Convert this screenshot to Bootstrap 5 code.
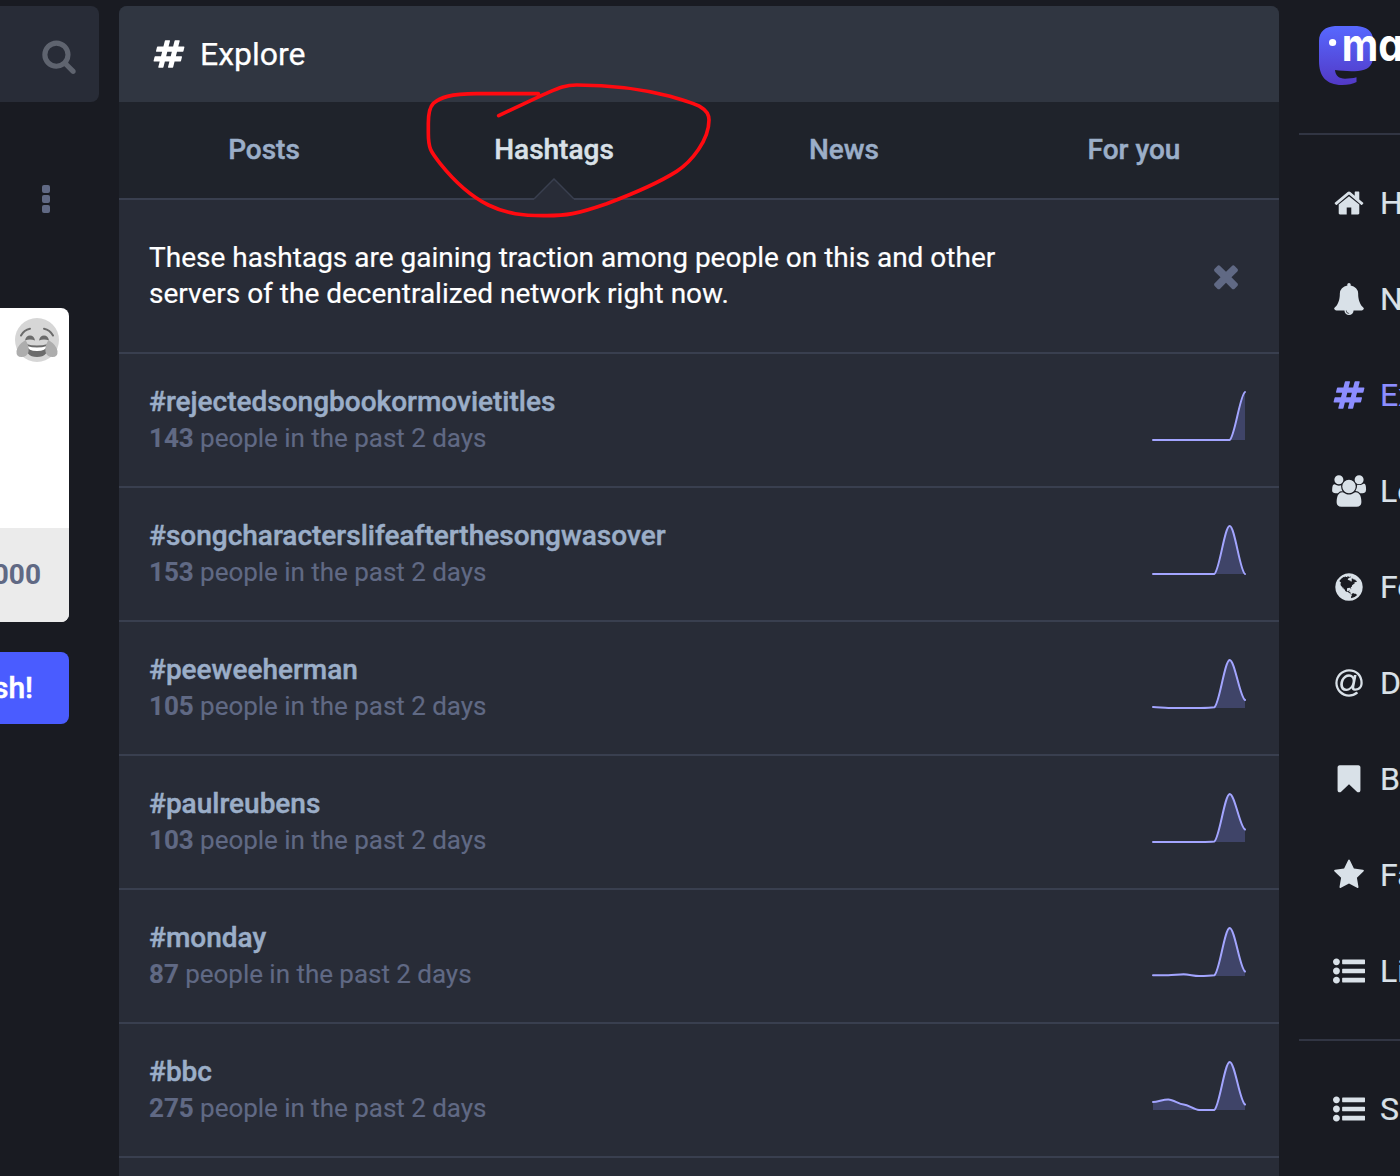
<!DOCTYPE html>
<html lang="en">
<head>
<meta charset="utf-8">
<meta name="viewport" content="width=device-width, initial-scale=1">
<title>Explore</title>
<link href="https://cdn.jsdelivr.net/npm/bootstrap@5.3.0/dist/css/bootstrap.min.css" rel="stylesheet">
<style>
  body { width: 1400px; height: 1176px; background: #191b22; font-family: Roboto, "Liberation Sans", sans-serif; font-size: 28px; line-height: 36px; color: #fff; overflow: hidden; }
  svg { display: block; fill: currentColor; flex: none; }
  .shell { width: 1400px; height: 1176px; gap: 20px; overflow: hidden; }
  .compose { width: 99px; padding-top: 6px; }
  .search-box { height: 96px; background: #282c37; border-radius: 0 8px 8px 0; color: #5f646f; padding: 32px 22px 0 0; }
  .dots { width: 8px; gap: 2.3px; margin: 82.5px 49.5px 0 0; }
  .dots i { width: 8px; height: 8px; border-radius: 2px; background: #606984; }
  .editor { width: 69px; height: 314px; margin-top: 94.9px; border-radius: 0 8px 8px 0; background: #fff; overflow: hidden; }
  .editor-top { height: 220px; padding: 10px 10px 0 0; }
  .editor-foot { height: 94px; background: #ebebeb; color: #606984; font-weight: 700; padding: 29px 28px 0 0; }
  .publish { width: 69px; height: 72px; margin-top: 30px; border-radius: 0 8px 8px 0; background: #4a5cff; font-size: 30px; font-weight: 500; padding: 0 36px 0 0; -webkit-text-stroke: .5px; }
  .column-main { width: 1160px; margin-top: 6px; background: #282c37; border-radius: 8px 8px 0 0; }
  .column-head { height: 96px; background: #303641; border-radius: 8px 8px 0 0; font-size: 32px; padding-left: 34px; gap: 15px; -webkit-text-stroke: .25px; }
  .tabs-row { height: 98px; background: #1f232b; border-bottom: 2px solid #393f4f; color: #9baec8; font-weight: 500; -webkit-text-stroke: .45px; }
  .tabs-row .tab-cell { flex: 1; }
  .tab-cell.current { color: #d9e1e8; }
  .notch { left: 50%; bottom: -2px; margin-left: -20px; }
  .note { height: 154px; border-bottom: 2px solid #393f4f; padding: 0 35px 0 30px; -webkit-text-stroke: .2px; }
  .trend { height: 134px; border-bottom: 2px solid #393f4f; padding: 0 29px 0 30px; color: #606984; }
  .trend-name { color: #9baec8; font-weight: 500; line-height: 36px; -webkit-text-stroke: .45px; }
  .trend-sub { font-size: 26px; line-height: 36px; letter-spacing: -.03px; -webkit-text-stroke: .15px; }
  .trend-sub b { font-weight: 700; }
  .spark { margin-top: -4px; }
  .side { width: 101px; color: #d9e1e8; font-size: 32px; overflow: hidden; }
  .brand { height: 133px; }
  .wordmark { font-family: Inter, "Liberation Sans", sans-serif; font-weight: 700; font-size: 45px; font-feature-settings: "cv11"; }
  .rule { height: 2px; background: #313543; }
  .links-wrap { padding-top: 20px; }
  .rule-low { margin-top: 20px; margin-bottom: 20px; }
  .side-link { height: 96px; padding-left: 34.4px; gap: 14.6px; white-space: nowrap; -webkit-text-stroke: .2px; }
  .side-link svg { margin-top: -.6px; }
  .side-link span { margin-top: -1px; }
  .side-link.on { color: #8c8dff; }
  .side-link .wide-icon { margin-left: -2px; margin-right: -2px; }
  .scribble { left: 410px; top: 70px; }
</style>
<script src="https://cdn.jsdelivr.net/npm/bootstrap@5.3.0/dist/js/bootstrap.bundle.min.js"></script>
</head>
<body>
<svg width="0" height="0" class="position-absolute">
  <symbol id="hash" viewBox="0 0 1792 1792"><path d="M991 1024l64-256h-254l-64 256h254zm768-504l-56 224q-7 24-31 24h-327l-64 256h311q15 0 25 12 10 14 6 28l-56 224q-5 24-31 24h-327l-81 328q-7 24-31 24h-224q-16 0-26-12-9-12-6-28l78-312h-254l-81 328q-7 24-31 24h-225q-15 0-25-12-9-12-6-28l78-312h-311q-15 0-25-12-9-12-6-28l56-224q7-24 31-24h327l64-256h-311q-15 0-25-12-10-14-6-28l56-224q5-24 31-24h327l81-328q7-24 32-24h224q15 0 25 12 9 12 6 28l-78 312h254l81-328q7-24 32-24h224q15 0 25 12 9 12 6 28l-78 312h311q15 0 25 12 9 12 6 28z"/></symbol>
  <symbol id="list" viewBox="0 0 1792 1792"><path d="M384 1408q0 80-56 136t-136 56-136-56-56-136 56-136 136-56 136 56 56 136zm0-512q0 80-56 136t-136 56-136-56-56-136 56-136 136-56 136 56 56 136zm1408 416v192q0 13-9.5 22.5t-22.5 9.5h-1216q-13 0-22.5-9.5t-9.5-22.5v-192q0-13 9.5-22.5t22.5-9.5h1216q13 0 22.5 9.5t9.5 22.5zm-1408-928q0 80-56 136t-136 56-136-56-56-136 56-136 136-56 136 56 56 136zm1408 416v192q0 13-9.5 22.5t-22.5 9.5h-1216q-13 0-22.5-9.5t-9.5-22.5v-192q0-13 9.5-22.5t22.5-9.5h1216q13 0 22.5 9.5t9.5 22.5zm0-512v192q0 13-9.5 22.5t-22.5 9.5h-1216q-13 0-22.5-9.5t-9.5-22.5v-192q0-13 9.5-22.5t22.5-9.5h1216q13 0 22.5 9.5t9.5 22.5z"/></symbol>
</svg>
<div class="shell d-flex position-relative">
  <aside class="compose d-flex flex-column flex-shrink-0">
    <div class="search-box d-flex justify-content-end">
      <svg width="36" height="36" viewBox="0 0 1792 1792"><path d="M1216 832q0-185-131.5-316.5t-316.5-131.5-316.5 131.5-131.5 316.5 131.5 316.5 316.5 131.5 316.5-131.5 131.5-316.5zm512 832q0 52-38 90t-90 38q-54 0-90-38l-343-342q-179 124-399 124-143 0-273.5-55.5t-225-150-150-225-55.5-273.5 55.5-273.5 150-225 225-150 273.5-55.5 273.5 55.5 225 150 150 225 55.5 273.5q0 220-124 399l343 343q37 37 37 90z"/></svg>
    </div>
    <div class="dots d-flex flex-column align-self-end"><i></i><i></i><i></i></div>
    <div class="editor">
      <div class="editor-top d-flex justify-content-end">
        <svg width="44" height="44" viewBox="0 0 44 44">
          <circle cx="22" cy="22" r="22" fill="#d6d6d6"/>
          <g fill="none" stroke="#6b6b6b" stroke-width="2" stroke-linecap="round"><path d="M6 17.500Q9 12 15 10.800M38 17.500Q35 12 29 10.800"/></g>
          <path fill="#6b6b6b" d="M10 22.500Q11 17.500 15 17.500T20 22.500Q15 20.500 10 22.500ZM24 22.500Q25 17.500 29 17.500T34 22.500Q29 20.500 24 22.500Z"/>
          <path fill="#6b6b6b" d="M11 26Q22 29 33 26Q34 39 22 39T11 26Z"/><path fill="#fff" d="M12 28Q22 31 32 28Q31 33 22 33T12 28Z"/>
          <path fill="#adadad" d="M10.500 22Q14.500 28 13.500 34Q12 39 6.500 39T1.500 33Q2.500 27 10.500 22ZM33.500 22Q29.500 28 30.500 34Q32 39 37.500 39T42.500 33Q41.500 27 33.500 22Z"/>
        </svg>
      </div>
      <div class="editor-foot d-flex justify-content-end"><span>5000</span></div>
    </div>
    <div class="publish d-flex align-items-center justify-content-end">Publish!</div>
  </aside>

  <main class="column-main flex-shrink-0">
    <div class="column-head d-flex align-items-center">
      <svg width="32" height="32"><use href="#hash"/></svg><span>Explore</span>
    </div>
    <div class="tabs-row d-flex">
      <div class="tab-cell d-flex align-items-center justify-content-center">Posts</div>
      <div class="tab-cell current position-relative d-flex align-items-center justify-content-center">Hashtags
        <svg class="notch position-absolute" width="40" height="22" viewBox="0 0 40 22"><path d="M0 22V21L20 1L40 21V22Z" fill="#282c37"/><path d="M0 21L20 1L40 21" fill="none" stroke="#393f4f" stroke-width="1.500"/></svg>
      </div>
      <div class="tab-cell d-flex align-items-center justify-content-center">News</div>
      <div class="tab-cell d-flex align-items-center justify-content-center">For you</div>
    </div>
    <div class="note d-flex align-items-center justify-content-between">
      <div>These hashtags are gaining traction among people on this and other<br>servers of the decentralized network right now.</div>
      <svg width="36" height="36" viewBox="0 0 1792 1792" color="#606984"><path d="M1490 1322q0 40-28 68l-136 136q-28 28-68 28t-68-28l-294-294-294 294q-28 28-68 28t-68-28l-136-136q-28-28-28-68t28-68l294-294-294-294q-28-28-28-68t28-68l136-136q28-28 68-28t68 28l294 294 294-294q28-28 68-28t68 28l136 136q28 28 28 68t-28 68l-294 294 294 294q28 28 28 68z"/></svg>
    </div>
    <div id="trends"></div>
  </main>

  <nav class="side flex-shrink-0">
    <div class="brand">
      <svg width="101" height="100" viewBox="0 0 101 100">
        <defs><linearGradient id="lg" x1="0" y1="0" x2="0" y2="1"><stop offset="0" stop-color="#5768ff"/><stop offset="1" stop-color="#5239c6"/></linearGradient></defs>
        <path fill="url(#lg)" d="M20 41C20 31 27 26.600 36 26H58C67 26.600 74 31 74 39.500V57C74 66 68 70.500 59 71C51 71.500 43 71 36 70C36.500 76 40 78.500 46 78.700C50 78.700 54 78.300 57.500 77.300V82C54 84 49 85 43 85C27 85 20 76 20 61Z"/>
        <circle cx="33.600" cy="42.500" r="3.600" fill="#fff"/>
        <text class="wordmark" transform="translate(42.800 61) scale(.89 1)" fill="#fff">mastodon</text>
      </svg>
    </div>
    <div class="rule"></div>
    <div class="links-wrap">
      <div class="side-link d-flex align-items-center"><svg width="32" height="32" viewBox="0 0 1792 1792"><path d="M1472 992v480q0 26-19 45t-45 19h-384v-384h-256v384h-384q-26 0-45-19t-19-45v-480q0-1 .5-3t.5-3l575-474 575 474q1 2 1 6zm223-69l-62 74q-8 9-21 11h-3q-13 0-21-7l-692-577-692 577q-12 8-24 7-13-2-21-11l-62-74q-8-10-7-23.500t11-21.500l719-599q32-26 76-26t76 26l244 204v-195q0-14 9-23t23-9h192q14 0 23 9t9 23v408l219 182q10 8 11 21.500t-7 23.500z"/></svg><span>Home</span></div>
      <div class="side-link d-flex align-items-center"><svg width="32" height="32" viewBox="0 0 1792 1792"><path d="M912 1696q0-16-16-16-59 0-101.5-42.5t-42.5-101.5q0-16-16-16t-16 16q0 73 51.5 124.5t124.5 51.5q16 0 16-16zm816-288q0 52-38 90t-90 38h-448q0 106-75 181t-181 75-181-75-75-181h-448q-52 0-90-38t-38-90q50-42 91-88t85-119.5 74.5-158.5 50-206 19.5-260q0-152 117-282.5t307-158.5q-8-19-8-39 0-40 28-68t68-28 68 28 28 68q0 20-8 39 190 28 307 158.5t117 282.5q0 139 19.5 260t50 206 74.5 158.5 85 119.5 91 88z"/></svg><span>Notifications</span></div>
      <div class="side-link on d-flex align-items-center"><svg width="32" height="32"><use href="#hash"/></svg><span>Explore</span></div>
      <div class="side-link d-flex align-items-center"><svg class="wide-icon" width="36" height="32" viewBox="0 0 2048 1792"><path d="M657 896q-162 5-265 128h-134q-82 0-138-40.5t-56-118.5q0-353 124-353 6 0 43.5 21t97.5 42.5 119 21.5q67 0 133-23-5 37-5 66 0 159 93 293zm1071 637q0 120-73 189.500t-194 69.500h-874q-121 0-194-69.500t-73-189.500q0-53 3.500-103.500t14-109 26.500-108.500 43-97.500 62-81 85.500-53.500 111.500-20q10 0 43 21.500t73 48 107 48 135 21.500 135-21.500 107-48 73-48 43-21.500q61 0 111.500 20t85.500 53.500 62 81 43 97.500 26.500 108.500 14 109 3.500 103.500zm-1024-1277q0 106-75 181t-181 75-181-75-75-181 75-181 181-75 181 75 75 181zm704 384q0 159-112.500 271.500t-271.500 112.500-271.500-112.500-112.500-271.500 112.500-271.500 271.500-112.500 271.500 112.500 112.500 271.500zm576 225q0 78-56 118.500t-138 40.500h-134q-103-123-265-128 93-134 93-293 0-29-5-66 66 23 133 23 59 0 119-21.500t97.500-42.500 43.500-21q124 0 124 353zm-128-609q0 106-75 181t-181 75-181-75-75-181 75-181 181-75 181 75 75 181z"/></svg><span>Local</span></div>
      <div class="side-link d-flex align-items-center"><svg width="32" height="32" viewBox="0 0 1792 1792"><path d="M896 128q209 0 385.500 103t279.500 279.500 103 385.500-103 385.500-279.500 279.500-385.500 103-385.500-103-279.500-279.500-103-385.500 103-385.500 279.500-279.500 385.500-103zm274 521q-2 1-9.500 9.500t-13.500 9.500q2 0 4.500-5t5-11 3.500-7q6-7 22-15 14-6 52-12 34-8 51 11-2-2 9.500-13t14.500-12q3-2 15-4.500t15-7.500l2-22q-12 1-17.500-7t-6.500-21q0 2-6 8 0-7-4.500-8t-11.500 1-9 1q-10-3-15-7.500t-8-16.500-4-15q-2-5-9.500-11t-9.500-10q-1-2-2.500-5.500t-3-6.500-4-5.500-5.500-2.500-7 5-7.500 10-4.500 5q-3-2-6-1.500t-4.500 1-4.500 3-5 3.500q-3 2-8.500 3t-8.500 2q15-5-1-11-10-4-16-3 9-4 7.500-12t-8.500-14h5q-1-4-8.500-8.500t-17.500-8.500-13-6q-8-5-34-9.500t-33-.5q-5 6-4.500 10.500t4 14 3.500 12.500q1 6-5.500 13t-6.500 12q0 7 14 15.500t10 21.500q-3 8-16 16t-16 12q-5 8-1.500 18.500t10.500 16.500q2 2 1.500 4t-3.500 4.500-5.500 4-6.500 3.500l-3 2q-11 5-20.500-6t-13.500-26q-7-25-16-30-23-8-29 1-5-13-41-26-25-9-58-4 6-1 0-15-7-15-19-12 3-6 4-17.500t1-13.500q3-13 12-23 1-1 7-8.500t9.500-13.500.5-6q35 4 50-11 5-5 11.500-17t10.500-17q9-6 14-5.500t14.500 5.500 14.500 5q14 1 15.500-11t-7.500-20q12 1 3-17-4-7-8-9-12-4-27 5-8 4 2 8-1-1-9.500 10.500t-16.500 17.500-16-5q-1-1-5.500-13.500t-9.500-13.500q-8 0-16 15 3-8-11-15t-24-8q19-12-8-27-7-4-20.500-5t-19.500 4q-5 7-5.500 11.500t5 8 10.500 5.500 11.500 4 8.500 3q14 10 8 14-2 1-8.500 3.500t-11.500 4.500-6 4q-3 4 0 14t-2 14q-5-5-9-17.500t-7-16.500q7 9-25 6l-10-1q-4 0-16 2t-20.500 1-13.500-8q-4-8 0-20 1-4 4-2-4-3-11-9.500t-10-8.500q-46 15-94 41 6 1 12-1 5-2 13-6.500t10-5.500q34-14 42-7l5-5q14 16 20 25-7-4-30-1-20 6-22 12 7 12 5 18-4-3-11.500-10t-14.500-11-15-5q-16 0-22 1-146 80-235 222 7 7 12 8 4 1 5 9t2.500 11 11.500-3q9 8 3 19 1-1 44 27 19 17 21 21 3 11-10 18-1-2-9-9t-9-4q-3 5 .5 18.500t10.500 12.500q-7 0-9.500 16t-2.500 35.500-1 23.500l2 1q-3 12 5.500 34.500t21.500 19.500q-13 3 20 43 6 8 8 9 3 2 12 7.500t15 10 10 10.500q4 5 10 22.500t14 23.500q-2 6 9.500 20t10.500 23q-1 0-2.500 1t-2.500 1q3 7 15.500 14t15.500 13q1 3 2 10t3 11 8 2q2-20-24-62-15-25-17-29-3-5-5.500-15.500t-4.500-14.500q2 0 6 1.500t8.500 3.500 7.500 4 2 3q-3 7 2 17.500t12 18.500 17 19 12 13q6 6 14 19.500t0 13.500q9 0 20 10t17 20q5 8 8 26t5 24q2 7 8.500 13.500t12.500 9.500l16 8 13 7q5 2 18.500 10.500t21.500 11.500q10 4 16 4t14.500-2.500 13.500-3.500q15-2 29 15t21 21q36 19 55 11-2 1 .5 7.500t8 15.500 9 14.500 5.500 8.500q5 6 18 15t18 15q6-4 7-9-3 8 7 20t18 10q14-3 14-32-31 15-49-18 0-1-2.500-5.500t-4-8.500-2.500-8.500 0-7.500 5-3q9 0 10-3.500t-2-12.500-4-13q-1-8-11-20t-12-15q-5 9-16 8t-16-9q0 1-1.500 5.500t-1.500 6.500q-13 0-15-1 1-3 2.500-17.500t3.500-22.500q1-4 5.500-12t7.500-14.500 4-12.500-4.500-9.500-17.500-2.500q-19 1-26 20-1 3-3 10.500t-5 11.500-9 7q-7 3-24 2t-24-5q-13-8-22.500-29t-9.500-37q0-10 2.500-26.500t3-25-5.500-24.500q3-2 9-9.500t10-10.500q2-1 4.500-1.500t4.500 0 4-1.500 3-6q-1-1-4-3-3-3-4-3 7 3 28.500-1.500t27.500 1.500q15 11 22-2 0-1-2.500-9.500t-.5-13.500q5 27 29 9 3 3 15.500 5t17.500 5q3 2 7 5.500t5.500 4.500 5-.5 8.500-6.500q10 14 12 24 11 40 19 44 7 3 11 2t4.500-9.500 0-14-1.500-12.500l-1-8v-18l-1-8q-15-3-18.500-12t1.500-18.500 15-18.500q1-1 8-3.500t15.500-6.500 12.500-8q21-19 15-35 7 0 11-9-1 0-5-3t-7.500-5-4.500-2q9-5 2-16 5-3 7.500-11t7.500-10q9 12 21 2 8-8 1-16 5-7 20.500-10.500t18.500-9.500q7 2 8-2t1-12 3-12q4-5 15-9t13-5l17-11q3-4 0-4 18 2 31-11 10-11-6-20 3-6-3-9.500t-15-5.500q3-1 11.500-.5t10.500-1.500q15-10-7-16-17-5-43 12zm-163 877q206-36 351-189-3-3-12.500-4.500t-12.500-3.500q-18-7-24-8 1-7-2.500-13t-8-9-12.500-8-11-7q-2-2-7-6t-7-5.500-7.500-4.500-8.500-2-10 1l-3 1q-3 1-5.500 2.500t-5.500 3-4 3 0 2.500q-21-17-36-22-5-1-11-5.500t-10.500-7-10-1.500-11.500 7q-5 5-6 15t-2 13q-7-5 0-17.500t2-18.500q-3-6-10.500-4.500t-12 4.500-11.500 8.500-9 6.500-8.500 5.500-8.500 7.500q-3 4-6 12t-5 11q-2-4-11.500-6.500t-9.500-5.500q2 10 4 35t5 38q7 31-12 48-27 25-29 40-4 22 12 26 0 7-8 20.500t-7 21.500q0 6 2 16z"/></svg><span>Federated</span></div>
      <div class="side-link d-flex align-items-center"><svg width="32" height="32" viewBox="-128 0 1792 1792"><path d="M972 775q0-108-53.5-169t-147.5-61q-63 0-124 30.500t-110 84.500-79.500 137-30.500 180q0 112 53.500 173t150.500 61q96 0 176-66.500t122.500-166 42.500-203.500zm564 121q0 111-37 197t-98.500 135-131.500 74.500-145 27.500q-6 0-15.500.5t-16.500.5q-95 0-142-53-28-33-33-83-52 66-131.500 110t-173.500 44q-161 0-249.500-95.500t-88.500-269.500q0-157 66-290t179-210.500 246-77.500q87 0 155 35.500t106 99.500l2-19 11-56q1-6 5.500-12t9.500-6h118q5 0 13 11 5 5 3 16l-120 614q-5 24-5 48 0 39 12.500 52t44.500 13q28-1 57-5.500t73-24 77-50 57-89.500 24-137q0-292-174-466t-466-174q-130 0-248.500 51t-204 136.500-136.500 204-51 248.500 51 248.500 136.500 204 204 136.500 248.500 51q228 0 405-144 11-9 24-8t21 12l41 49q8 12 7 24-2 13-12 22-102 83-227.500 128t-258.500 45q-156 0-298-61t-245-163-163-245-61-298 61-298 163-245 245-163 298-61q344 0 556 212t212 556z"/></svg><span>Direct messages</span></div>
      <div class="side-link d-flex align-items-center"><svg width="32" height="32" viewBox="0 0 1792 1792"><path d="M1420 128q23 0 44 9 33 13 52.500 41t19.500 62v1289q0 34-19.500 62t-52.500 41q-19 8-44 8-48 0-83-32l-441-424-441 424q-36 33-83 33-23 0-44-9-33-13-52.500-41t-19.500-62v-1289q0-34 19.500-62t52.500-41q21-9 44-9h1048z"/></svg><span>Bookmarks</span></div>
      <div class="side-link d-flex align-items-center"><svg width="32" height="32" viewBox="0 0 1792 1792"><path d="M1728 647q0 22-26 48l-363 354 86 500q1 7 1 20 0 21-10.500 35.500t-30.500 14.500q-19 0-40-12l-449-236-449 236q-22 12-40 12-21 0-31.500-14.500t-10.500-35.500q0-6 2-20l86-500-364-354q-25-27-25-48 0-37 56-46l502-73 225-455q19-41 49-41t49 41l225 455 502 73q56 9 56 46z"/></svg><span>Favourites</span></div>
      <div class="side-link d-flex align-items-center"><svg width="32" height="32"><use href="#list"/></svg><span>Lists</span></div>
    </div>
    <div class="rule rule-low"></div>
    <div class="side-link d-flex align-items-center"><svg width="32" height="32"><use href="#list"/></svg><span>Sample list</span></div>
  </nav>

  <svg class="scribble position-absolute" width="320" height="160" viewBox="0 0 960 480"><path fill="none" stroke="#ff0a10" stroke-width="11" stroke-linecap="round" stroke-linejoin="round" d="M385 71H200C120 71 90 83 70 100C58 112 55 130 55 160V190C55 235 62 245 90 280C130 330 175 375 235 405C290 432 340 437 400 437C470 438 500 432 590 401C670 371 740 342 800 304C845 275 897 210 897 150C897 115 870 105 780 79C700 58 600 45 500 45C460 45 440 57 400 74L266 137"/></svg>
</div>
<script>
  /* seven daily values per tag, drawn on a 92x48 area */
  const tags = [
    ["rejectedsongbookormovietitles", 143, [48,48,48,48,48,48,0]],
    ["songcharacterslifeafterthesongwasover", 153, [48,48,48,48,48,0,48]],
    ["peeweeherman", 105, [47,48,48,48,47.3,0,40]],
    ["paulreubens", 103, [48,48,48,48,47.5,0,35.5]],
    ["monday", 87, [47.3,47.3,46.3,48,47.3,0,43.5]],
    ["bbc", 275, [40,37.5,42.5,48,48,0,42.5]]
  ];
  const W = 92 / 6;
  function curve(v) {
    const p = v.map((y, i) => [1 + i * W, y + 2]);
    let d = `M${p[0]}`;
    for (let i = 1; i < p.length; i++) {
      const a = p[i-1], b = p[i], z = p[i-2] || a, n = p[i+1] || b, h = W * .33;
      const c1 = [a[0] + h, Math.min(50, Math.max(2, a[1] + (b[1]-z[1])*.06))];
      const c2 = [b[0] - h, Math.min(50, Math.max(2, b[1] - (n[1]-a[1])*.06))];
      d += `C${c1} ${c2} ${b}`;
    }
    return d;
  }
  document.getElementById("trends").innerHTML = tags.map(([t, n, v]) => {
    const d = curve(v);
    return `<div class="trend d-flex align-items-center justify-content-between"><div><div class="trend-name">#${t}</div><div class="trend-sub"><b>${n}</b> people in the past 2 days</div></div>
    <svg class="spark" width="98" height="56" viewBox="0 0 98 56"><path d="${d}V50H1Z" fill="#3f4468"/><path d="${d}" fill="none" stroke="#a3a5ff" stroke-width="2" stroke-linecap="round"/></svg></div>`;
  }).join("");
</script>
</body>
</html>
